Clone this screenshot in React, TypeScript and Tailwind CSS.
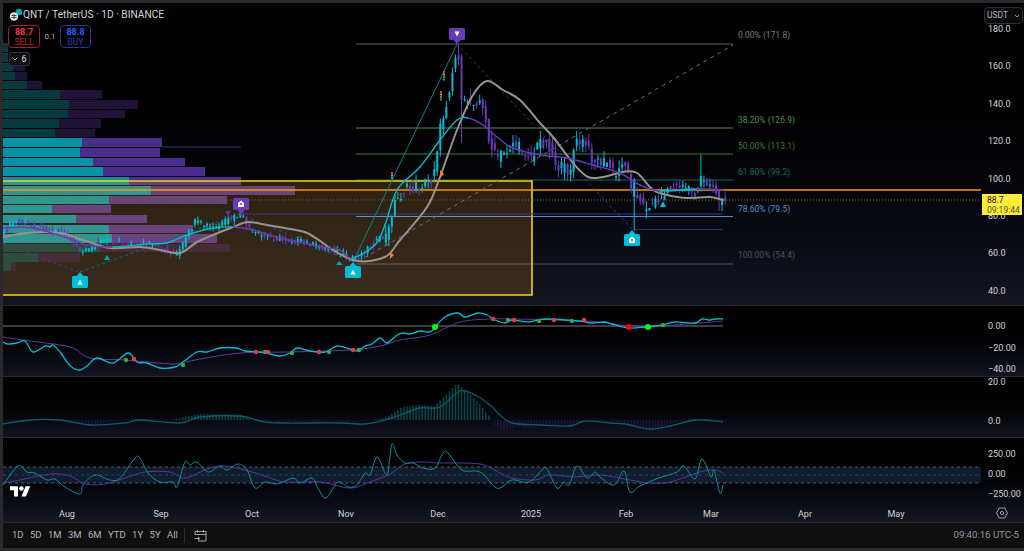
import React from 'react';

type P = [number, number];

const FONT = "font-['Roboto','Open_Sans',sans-serif]";

// close price path, page coords
const closePath: P[] = [
  [4, 232], [15, 221], [30, 225], [50, 230], [65, 232], [75, 245], [80, 253], [90, 250], [95, 243], [105, 240],
  [115, 238], [130, 243], [145, 243], [160, 248], [178, 254], [185, 240], [195, 222], [205, 225], [215, 228], [225, 222],
  [232, 218], [240, 215], [248, 225], [252, 232], [262, 236], [275, 238], [290, 240], [305, 242], [320, 247], [335, 250],
  [345, 256], [355, 260], [365, 250], [378, 240], [388, 235], [393, 205], [405, 190], [420, 185], [432, 180], [440, 130],
  [447, 100], [455, 58], [459, 55], [462, 115], [466, 98], [472, 100], [480, 100], [486, 125], [492, 150], [496, 157],
  [505, 153], [513, 143], [522, 150], [533, 157], [540, 140], [550, 147], [557, 167], [570, 170], [575, 143], [585, 143],
  [593, 160], [607, 163], [617, 177], [623, 157], [627, 170], [633, 193], [643, 207], [653, 203], [660, 197], [667, 190],
  [683, 185], [697, 197], [700, 177], [707, 183], [715, 190], [720, 203], [724, 200],
];

const maLine: P[] = [
  [3, 228], [33, 228], [67, 238], [87, 245], [113, 247], [147, 244], [167, 243], [187, 235], [213, 228], [233, 227],
  [253, 230], [280, 238], [307, 244], [327, 248], [340, 250], [352, 258], [375, 245], [385, 225], [397, 190], [420, 167],
  [440, 140], [457, 120], [468, 118], [483, 125], [497, 137], [513, 148], [540, 155], [567, 158], [593, 165], [620, 173],
  [640, 185], [660, 191], [697, 189], [723, 190],
];

const grayLine: P[] = [
  [3, 237], [27, 233], [60, 233], [83, 240], [110, 248], [140, 247], [160, 250], [180, 253], [197, 242], [213, 235],
  [233, 227], [248, 222], [267, 225], [290, 229], [307, 233], [323, 243], [333, 250], [357, 261], [385, 257], [400, 240],
  [427, 207], [440, 177], [457, 130], [473, 95], [487, 81], [503, 90], [520, 100], [540, 123], [553, 137], [573, 163],
  [588, 177], [603, 177], [623, 172], [637, 173], [653, 190], [667, 195], [687, 198], [710, 197], [723, 200],
];

const osc1: P[] = [
  [3, 342], [8, 344], [17, 343], [25, 341], [33, 352], [45, 346], [50, 347], [53, 345], [60, 352], [67, 362], [73, 368],
  [80, 370], [87, 366], [97, 358], [113, 363], [128, 353], [137, 362], [147, 363], [160, 368], [175, 367], [183, 362],
  [197, 352], [207, 352], [220, 348], [236, 348], [245, 351], [260, 352], [270, 354], [280, 356], [290, 353], [297, 348],
  [310, 351], [325, 352], [337, 346], [350, 349], [358, 351], [365, 346], [372, 344], [380, 338], [387, 343], [397, 335],
  [403, 333], [410, 334], [420, 331], [430, 332], [435, 327], [445, 317], [458, 313], [465, 317], [478, 313], [487, 315],
  [495, 320], [505, 323], [512, 320], [529, 322], [545, 319], [579, 321], [592, 323], [605, 322], [612, 324], [629, 328],
  [645, 327], [662, 325], [675, 322], [695, 323], [702, 319], [709, 320], [715, 319], [723, 319],
];

const osc1Sig: P[] = [
  [3, 337], [30, 341], [70, 347], [90, 358], [125, 360], [175, 364], [195, 360], [240, 353], [290, 352], [350, 350],
  [380, 346], [400, 340], [430, 335], [460, 322], [490, 319], [512, 319], [560, 320], [600, 322], [630, 326], [660, 326], [723, 321],
];

const dots: [number, number, string, number][] = [
  [126, 360, '#43a047', 2.2], [134, 359, '#f23645', 2.2], [183, 365, '#43a047', 2.2], [256, 352, '#f23645', 2.2],
  [265, 352, '#43a047', 2.2], [268, 352, '#f23645', 2.2], [292, 353, '#43a047', 2.2], [319, 352, '#f23645', 2.2],
  [329, 352, '#43a047', 2.2], [353, 350, '#f23645', 2.2], [359, 350, '#43a047', 2.2], [435, 327, '#00ff00', 3],
  [493, 319, '#f23645', 2.2], [508, 320, '#43a047', 2.2], [514, 320, '#f23645', 2.2], [539, 321, '#43a047', 2.2],
  [554, 320, '#f23645', 2.2], [572, 321, '#43a047', 2.2], [584, 320, '#f23645', 2.2], [629, 327, '#ff0000', 3],
  [648, 327, '#00ff00', 3], [663, 325, '#43a047', 2.2],
];

const macd: P[] = [
  [3, 424], [30, 420], [60, 420], [90, 425], [125, 423], [140, 420], [180, 423], [200, 417], [240, 416], [260, 421],
  [280, 423], [340, 423], [365, 424], [385, 420], [400, 415], [420, 408], [440, 407], [460, 391], [475, 395], [490, 405],
  [500, 415], [512, 423], [540, 425], [570, 426], [585, 421], [610, 423], [625, 424], [650, 429], [670, 426], [690, 421], [705, 420], [723, 422],
];

const histPath: P[] = [
  [3, -2], [40, 0], [70, -3], [90, -5], [110, -2], [135, 1], [170, 0], [185, 3], [200, 6], [240, 5], [252, 0], [270, -3],
  [330, -2], [365, -1], [385, 2], [392, 6], [402, 13], [420, 15], [435, 14], [445, 24], [457, 37], [465, 30], [480, 16],
  [490, 3], [495, -6], [505, -10], [515, -7], [540, -6], [570, -7], [582, 0], [600, -1], [625, -3], [640, -9], [652, -11], [670, -4], [690, 1], [705, 1], [723, -2],
];

const cci: P[] = [
  [3, 485], [18, 466], [27, 472], [35, 473], [47, 480], [55, 479], [65, 487], [80, 494], [83, 485], [95, 475], [110, 480],
  [120, 478], [135, 458], [140, 458], [148, 473], [160, 482], [173, 482], [177, 487], [185, 462], [190, 465], [197, 462],
  [208, 472], [220, 466], [227, 470], [238, 464], [247, 470], [255, 488], [265, 482], [277, 484], [293, 478], [300, 483],
  [312, 478], [318, 488], [326, 498], [338, 482], [348, 487], [357, 485], [365, 473], [370, 475], [377, 457], [385, 473],
  [388, 472], [392, 444], [397, 455], [405, 463], [413, 463], [423, 468], [435, 468], [443, 453], [448, 453], [462, 470],
  [480, 472], [495, 487], [502, 487], [512, 480], [529, 482], [542, 470], [547, 469], [557, 488], [564, 482], [569, 485],
  [577, 466], [587, 478], [595, 472], [600, 477], [614, 485], [624, 471], [630, 492], [640, 486], [659, 478], [677, 472],
  [684, 466], [695, 479], [702, 459], [711, 477], [714, 470], [720, 493], [723, 485],
];

const cciSig: P[] = [
  [3, 483], [20, 480], [50, 474], [70, 476], [85, 484], [105, 484], [125, 478], [145, 472], [170, 472], [185, 478],
  [210, 468], [225, 466], [245, 470], [265, 476], [285, 482], [320, 482], [350, 488], [370, 482], [390, 474], [405, 464],
  [420, 462], [440, 463], [480, 464], [500, 473], [512, 478], [535, 480], [550, 475], [575, 477], [600, 475], [630, 480],
  [650, 483], [670, 482], [700, 472], [715, 470], [723, 473],
];

// y, height, teal end x, purple end x, faded
const profile: [number, number, number, number, boolean][] = [
  [43, 9, 8, 8, true], [53, 9, 8, 8, true], [63, 8, 13, 25, true], [72, 8, 15, 27, true], [81, 8, 27, 42, true],
  [90, 9, 60, 102, true], [100, 9, 69, 138, true], [110, 8, 68, 125, true], [119, 9, 59, 101, true], [129, 8, 55, 95, true],
  [138, 9, 82, 162, false], [148, 9, 80, 160, false], [158, 8, 93, 185, false], [167, 9, 103, 205, false], [177, 8, 129, 241, false],
  [186, 9, 151, 295, false], [196, 8, 109, 227, false], [205, 8, 52, 111, false], [215, 8, 76, 147, false], [225, 8, 109, 193, false],
  [234, 9, 112, 217, false], [244, 8, 100, 230, true], [253, 9, 38, 80, true], [262, 9, 11, 16, true],
];

const interp = (pts: P[], x: number) => {
  for (let i = 1; i < pts.length; i++) {
    if (x <= pts[i][0]) {
      const [x0, y0] = pts[i - 1];
      const [x1, y1] = pts[i];
      return y0 + ((y1 - y0) * (x - x0)) / (x1 - x0);
    }
  }
  return pts[pts.length - 1][1];
};

const rnd = (n: number) => {
  const v = Math.sin(n * 12.9898) * 43758.5453;
  return v - Math.floor(v);
};

const barXs = Array.from({ length: 239 }, (_, i) => 4 + i * 3.03);

const candles = barXs.map((x, i) => {
  const vol = x > 385 && x < 650 ? 6 : x > 650 ? 4.5 : 3;
  let c = interp(closePath, x) + (rnd(i) - 0.5) * vol * 2;
  let o = interp(closePath, x - 3.03) + (rnd(i + 1000) - 0.5) * vol * 2;
  let hi = Math.min(o, c) - rnd(i + 2000) * vol * 1.4;
  let lo = Math.max(o, c) + rnd(i + 3000) * vol * 1.4;
  if (Math.abs(x - 633) < 1.6) {
    o = 197;
    c = 180;
    hi = 178;
    lo = 231;
  }
  if (Math.abs(x - 702) < 1.6) {
    o = 186;
    c = 176;
    hi = 155;
  }
  if (Math.abs(x - 720) < 1.6) lo = 211;
  if (Math.abs(x - 459) < 1.6) hi = 44;
  if (Math.abs(x - 462) < 1.6) lo = 143;
  return { x, o, c, hi, lo, up: c < o };
});

const seg = (pts: P[], i: number) => {
  const p0 = pts[Math.max(i - 1, 0)];
  const p1 = pts[i];
  const p2 = pts[i + 1];
  const p3 = pts[Math.min(i + 2, pts.length - 1)];
  const c1: P = [p1[0] + (p2[0] - p0[0]) / 6, p1[1] + (p2[1] - p0[1]) / 6];
  const c2: P = [p2[0] - (p3[0] - p1[0]) / 6, p2[1] - (p3[1] - p1[1]) / 6];
  return `C${c1[0].toFixed(1)} ${c1[1].toFixed(1)} ${c2[0].toFixed(1)} ${c2[1].toFixed(1)} ${p2[0]} ${p2[1]}`;
};

const smooth = (pts: P[]) => {
  let d = `M${pts[0][0]} ${pts[0][1]}`;
  for (let i = 0; i < pts.length - 1; i++) d += seg(pts, i);
  return d;
};

const Ln = ({ x1, x2, y, c, w = 1, dash }: { x1: number; x2: number; y: number; c: string; w?: number; dash?: string }) => (
  <line x1={x1} x2={x2} y1={y} y2={y} stroke={c} strokeWidth={w} strokeDasharray={dash} />
);

const Marker = ({ x, y, up, color, kind }: { x: number; y: number; up: boolean; color: string; kind: 'tri' | 'home' }) => {
  // y = the tip
  const top = up ? y + 4 : y - 16;
  return (
    <g>
      <rect x={x - 8} y={top} width={16} height={12} rx={1.5} fill={color} />
      {up ? (
        <polygon points={`${x - 4},${top + 0.5} ${x},${y} ${x + 4},${top + 0.5}`} fill={color} />
      ) : (
        <polygon points={`${x - 4},${top + 11.5} ${x},${y} ${x + 4},${top + 11.5}`} fill={color} />
      )}
      {kind === 'home' ? (
        <g>
          <polygon points={`${x - 3},${top + 5} ${x},${top + 2.5} ${x + 3},${top + 5} ${x + 3},${top + 9} ${x - 3},${top + 9}`} fill="#fff" />
          <circle cx={x} cy={top + 6} r={1} fill="#d81b60" />
        </g>
      ) : up ? (
        <polygon points={`${x - 2.5},${top + 8.5} ${x},${top + 3.5} ${x + 2.5},${top + 8.5}`} fill="#fff" />
      ) : (
        <polygon points={`${x - 2.5},${top + 3.5} ${x},${top + 8.5} ${x + 2.5},${top + 3.5}`} fill="#fff" />
      )}
    </g>
  );
};

const Lights = ({ x, y }: { x: number; y: number }) => (
  <g>
    <rect x={x} y={y} width={2} height={2} fill="#f23645" />
    <rect x={x} y={y + 2.5} width={2} height={2} fill="#c9a227" />
    <rect x={x} y={y + 5} width={2} height={2} fill="#2e9e4f" />
    <rect x={x} y={y + 7.5} width={2} height={2} fill="#2e9e4f" />
  </g>
);

const fibs: [number, string, string, number][] = [
  [44, '#5d606b', '0.00% (171.8)', 35],
  [128, '#4f8f4f', '38.20% (126.9)', 120],
  [154, '#3c7a38', '50.00% (113.1)', 146],
  [180, '#0c6b60', '61.80% (99.2)', 172],
  [216.5, '#4f8fd0', '78.60% (79.5)', 208.5],
  [264, '#4e515b', '100.00% (54.4)', 255],
];

const MainChart = () => (
  <svg className="block shrink-0 w-[978px] h-[302px]" viewBox="3 3 978 302">
    {profile.map(([y, h, t, e, faded]) => (
      <g key={y}>
        <rect x={3} y={y} width={t - 3} height={h} fill={faded ? '#053a3f' : '#0892a6'} />
        {e > t && <rect x={t} y={y} width={e - t} height={h} fill={faded ? '#211338' : '#4b2e8b'} />}
      </g>
    ))}
    <Ln x1={162} x2={241} y={147} c="#3e2a78" />
    {fibs.map(([y, c]) => (
      <Ln key={y} x1={356} x2={733} y={y} c={c} />
    ))}
    <rect x={3} y={181} width={529} height={114} fill="#ffab2e" fillOpacity={0.17} />
    <path d="M3 181H532V295H3" fill="none" stroke="#f2d21f" strokeWidth={1.6} />
    <Ln x1={3} x2={981} y={190} c="#ff9800" w={1.6} />
    <Ln x1={3} x2={981} y={200} c="#7d6e20" dash="1 2" />
    <Ln x1={243} x2={723} y={214} c="#46307f" />
    <Ln x1={635} x2={723} y={229.5} c="#3a2a6b" />

    <path d="M3 243L78 272" stroke="#4b3790" strokeDasharray="3 3" fill="none" />
    <path d="M80 272L240 214" stroke="#0b7280" strokeDasharray="3 3" fill="none" />
    <path d="M240 214L353 262" stroke="#4b3790" strokeDasharray="3 3" fill="none" />
    <path d="M353 262L457 44" stroke="#0b8090" fill="none" />
    <path d="M457 44L633 230" stroke="#43308a" strokeDasharray="3 3" fill="none" />
    <path d="M357 262L733 45" stroke="#6c6f78" strokeDasharray="4 4" fill="none" />

    {candles.map((k) => {
      const col = k.up ? '#00bcd4' : '#673ab7';
      return (
        <g key={k.x}>
          <rect x={k.x - 0.5} y={k.hi} width={1} height={k.lo - k.hi} fill={col} />
          <rect x={k.x - 1} y={Math.min(k.o, k.c)} width={2} height={Math.max(Math.abs(k.o - k.c), 1)} fill={col} />
        </g>
      );
    })}

    <path d={smooth(grayLine)} fill="none" stroke="#97948d" strokeWidth={2} strokeLinecap="round" />
    {maLine.slice(0, -1).map((p, i) => (
      <path
        key={p[0]}
        d={`M${p[0]} ${p[1]}${seg(maLine, i)}`}
        fill="none"
        stroke={maLine[i + 1][1] < p[1] ? '#00bcd4' : '#673ab7'}
        strokeWidth={1.4}
        strokeLinecap="round"
      />
    ))}

    <polygon points="104,260 107,255 110,260" fill="#0aa5a8" />
    <polygon points="336,265 339,261 343,265" fill="#0aa5a8" />
    <polygon points="660,207 663,201 666,207" fill="#00bcd4" />
    <polygon points="225,211 231,211 228,216" fill="#5a3a9c" />
    <polygon points="238,211 244,211 241,216" fill="#5a3a9c" />
    <polygon points="440,170 444,174 440,178" fill="#ff7a1a" />
    <polygon points="390,252 394,255 390,259" fill="#ff7a1a" />
    <Lights x={443} y={71} />
    <Lights x={440} y={91} />
    <Lights x={391} y={172} />

    <Marker x={80} y={272} up color="#00bcd4" kind="tri" />
    <Marker x={353} y={262} up color="#00bcd4" kind="tri" />
    <Marker x={632} y={230} up color="#00bcd4" kind="home" />
    <Marker x={241} y={214} up={false} color="#673ab7" kind="home" />
    <Marker x={457} y={44} up={false} color="#673ab7" kind="tri" />

    {fibs.map(([y, c, t, ty]) => (
      <text key={y} x={738} y={ty + 3} fontSize={8.5} fill={c === '#5d606b' ? '#787b86' : c}>
        {t}
      </text>
    ))}
  </svg>
);

const Pane2 = () => (
  <svg className="block shrink-0 w-[978px] h-[70px]" viewBox="3 306 978 70">
    <Ln x1={3} x2={723} y={326} c="#787b86" />
    <path d={smooth(osc1Sig)} fill="none" stroke="#5e3a9e" strokeWidth={1} />
    <path d={smooth(osc1)} fill="none" stroke="#00bcd4" strokeWidth={1.3} />
    {dots.map(([x, y, c, r]) => (
      <circle key={x} cx={x} cy={y} r={r} fill={c} />
    ))}
  </svg>
);

const Pane3 = () => (
  <svg className="block shrink-0 w-[978px] h-[60px]" viewBox="3 377 978 60">
    {barXs.map((x) => {
      const v = interp(histPath, x);
      return (
        <rect
          key={x}
          x={x - 0.8}
          y={v > 0 ? 420 - v : 420}
          width={1.6}
          height={Math.abs(v)}
          fill={v > 0 ? '#09444a' : '#1f1440'}
        />
      );
    })}
    <path d={smooth(macd)} fill="none" stroke="#0a5e68" strokeWidth={1.3} />
  </svg>
);

const Pane4 = () => (
  <svg className="block shrink-0 w-[978px] h-[84px]" viewBox="3 438 978 84">
    <rect x={3} y={467} width={978} height={16} fill="#101d2d" />
    <Ln x1={3} x2={981} y={467} c="#555a66" dash="3 3" />
    <Ln x1={3} x2={981} y={475} c="#3a3f4b" dash="3 3" />
    <Ln x1={3} x2={981} y={483} c="#555a66" dash="3 3" />
    <path d={smooth(cciSig)} fill="none" stroke="#54379f" strokeWidth={1} />
    <path d={smooth(cci)} fill="none" stroke="#0a8ea0" strokeWidth={1} />
    <g transform="translate(10 484) scale(0.57)" fill="#fff">
      <path d="M14 22H7V11H0V4h14v18zM28 22h-8l7.5-18h8L28 22z" />
      <circle cx={20} cy={8} r={4} />
    </g>
    {[
      ['Aug', 67],
      ['Sep', 161],
      ['Oct', 252],
      ['Nov', 346],
      ['Dec', 438],
      ['2025', 531],
      ['Feb', 626],
      ['Mar', 711],
      ['Apr', 805],
      ['May', 896],
    ].map(([t, x]) => (
      <text key={t} x={x} y={516.5} textAnchor="middle" fontSize={9} fill="#d1d4dc">
        {t}
      </text>
    ))}
  </svg>
);

const TagAxis = ({ labels, pt, gap, h = 'h-[10px]' }: { labels: string[]; pt: string; gap: string; h?: string }) => (
  <div className={`w-[43px] shrink-0 flex flex-col pl-[7px] text-[9px] leading-[10px] text-[#d1d4dc] ${pt} ${gap}`}>
    {labels.map((l) => (
      <div key={l} className={h}>
        {l}
      </div>
    ))}
  </div>
);

const ranges = ['1D', '5D', '1M', '3M', '6M', 'YTD', '1Y', '5Y', 'All'];

export default function App() {
  return (
    <div className={`relative w-[1024px] h-[551px] overflow-hidden bg-[#2a2a2c] pt-[3px] pb-[3px] pl-[3px] flex flex-col gap-px ${FONT}`}>
      {/* main pane */}
      <div className="relative h-[302px] shrink-0 flex bg-linear-to-b from-black to-[#121520]">
        <MainChart />
        <div className="w-[43px] shrink-0 flex flex-col gap-[27.4px] pt-[21px] pl-[7px] text-[9px] leading-[10px] text-[#d1d4dc]">
          {['180.0', '160.0', '140.0', '120.0', '100.0', '80.0', '60.0', '40.0'].map((l) => (
            <div key={l} className="h-[10px]">
              {l}
            </div>
          ))}
        </div>

        {/* legend */}
        <div className="absolute left-[5px] top-[4px] flex flex-col items-start text-[#d1d4dc]">
          <div className="flex items-center h-[16px]">
            <svg width="15" height="14" viewBox="0 0 15 14">
              <circle cx="11" cy="4" r="3.2" fill="#12a5b0" />
              <circle cx="6" cy="8.5" r="4.2" fill="#e6e6e6" />
              <path d="M3.5 7.5h5M3.5 9.5h5M6 6v5" stroke="#333" strokeWidth="0.9" fill="none" />
            </svg>
            <span className="text-[10.2px] leading-none whitespace-nowrap">QNT / TetherUS · 1D · BINANCE</span>
          </div>
          <div className="flex items-center mt-[2px] ml-[0px]">
            <div className="w-[32px] h-[23px] border border-[#a81c2c] rounded-[4px] bg-black flex flex-col items-center justify-center leading-[10px]">
              <span className="text-[9px] font-bold text-[#f23645]">88.7</span>
              <span className="text-[8.5px] text-[#c22233]">SELL</span>
            </div>
            <span className="w-[20px] text-center text-[8px] text-[#b2b5be]">0.1</span>
            <div className="w-[31px] h-[23px] border border-[#1c3a9e] rounded-[4px] bg-black flex flex-col items-center justify-center leading-[10px]">
              <span className="text-[9px] font-bold text-[#2962ff]">88.8</span>
              <span className="text-[8.5px] text-[#1f44b8]">BUY</span>
            </div>
          </div>
          <div className="mt-[4px] ml-[1px] w-[21px] h-[14px] border border-[#2a2e39] rounded-[2px] bg-[#101114] flex items-center justify-center gap-[3px]">
            <svg width="6" height="4" viewBox="0 0 6 4">
              <path d="M0.5 0.5L3 3L5.5 0.5" fill="none" stroke="#b2b5be" strokeWidth="0.9" />
            </svg>
            <span className="text-[9px] leading-none">6</span>
          </div>
        </div>

        {/* currency select */}
        <div className="absolute right-[1px] top-[4px] w-[39px] h-[17px] border border-[#2a2e39] rounded-[4px] bg-[#0a0b0d] flex items-center justify-between px-[2px]">
          <span className="text-[8.5px] text-[#b2b5be] leading-none">USDT</span>
          <svg width="6" height="4" viewBox="0 0 6 4">
            <path d="M0.8 0.8L3 3L5.2 0.8" fill="none" stroke="#9598a1" strokeWidth="0.9" />
          </svg>
        </div>

        {/* last price tag */}
        <div className="absolute left-[979px] top-[191px] w-[40px] h-[21px] bg-[#ffeb3b] flex flex-col justify-center pl-[5px] text-[8.5px] leading-[10px]">
          <span className="text-[#131722]">88.7</span>
          <span className="text-[#55532a]">09:19:44</span>
        </div>
      </div>

      {/* oscillator */}
      <div className="h-[70px] shrink-0 flex bg-linear-to-b from-black to-[#121520]">
        <Pane2 />
        <TagAxis labels={['0.00', '−20.00', '−40.00']} pt="pt-[15px]" gap="gap-[11.7px]" />
      </div>

      {/* macd */}
      <div className="h-[60px] shrink-0 flex bg-linear-to-b from-black to-[#121520]">
        <Pane3 />
        <TagAxis labels={['20.0', '0.0']} pt="pt-[0px]" gap="gap-[31px]" h="h-[8px]" />
      </div>

      {/* cci + time axis */}
      <div className="h-[84px] shrink-0 flex bg-linear-to-b from-black to-[#131722]">
        <Pane4 />
        <div className="w-[43px] shrink-0 flex flex-col">
          <TagAxis labels={['250.00', '0.00', '−250.00']} pt="pt-[11px]" gap="gap-[10px]" />
          <svg className="mt-[8px] ml-[15px]" width="12" height="12" viewBox="0 0 12 12">
            <polygon points="3.2,1 8.8,1 11.5,6 8.8,11 3.2,11 0.5,6" fill="none" stroke="#b2b5be" strokeWidth="0.9" />
            <circle cx="6" cy="6" r="1.6" fill="none" stroke="#b2b5be" strokeWidth="0.9" />
          </svg>
        </div>
      </div>

      {/* bottom toolbar */}
      <div className="h-[25px] shrink-0 bg-[#0f0f0f] flex items-center pl-[9px] pr-[5px] text-[#b2b5be]">
        <div className="flex items-center gap-[6.4px] text-[9.5px]">
          {ranges.map((r) => (
            <span key={r}>{r}</span>
          ))}
        </div>
        <div className="w-px h-[15px] bg-[#2a2e39] ml-[6px]" />
        <svg className="ml-[9px]" width="13" height="13" viewBox="0 0 13 13" fill="none" stroke="#b2b5be" strokeWidth="0.9">
          <path d="M1 6V2.5h11V12H4M1 5.5h11M3.5 1v2.5M9.5 1v2.5" />
          <path d="M0.5 9.5h5M4 8l1.7 1.5L4 11" />
        </svg>
        <span className="ml-auto text-[9.6px] text-[#9598a1]">09:40:16 UTC-5</span>
      </div>
    </div>
  );
}
